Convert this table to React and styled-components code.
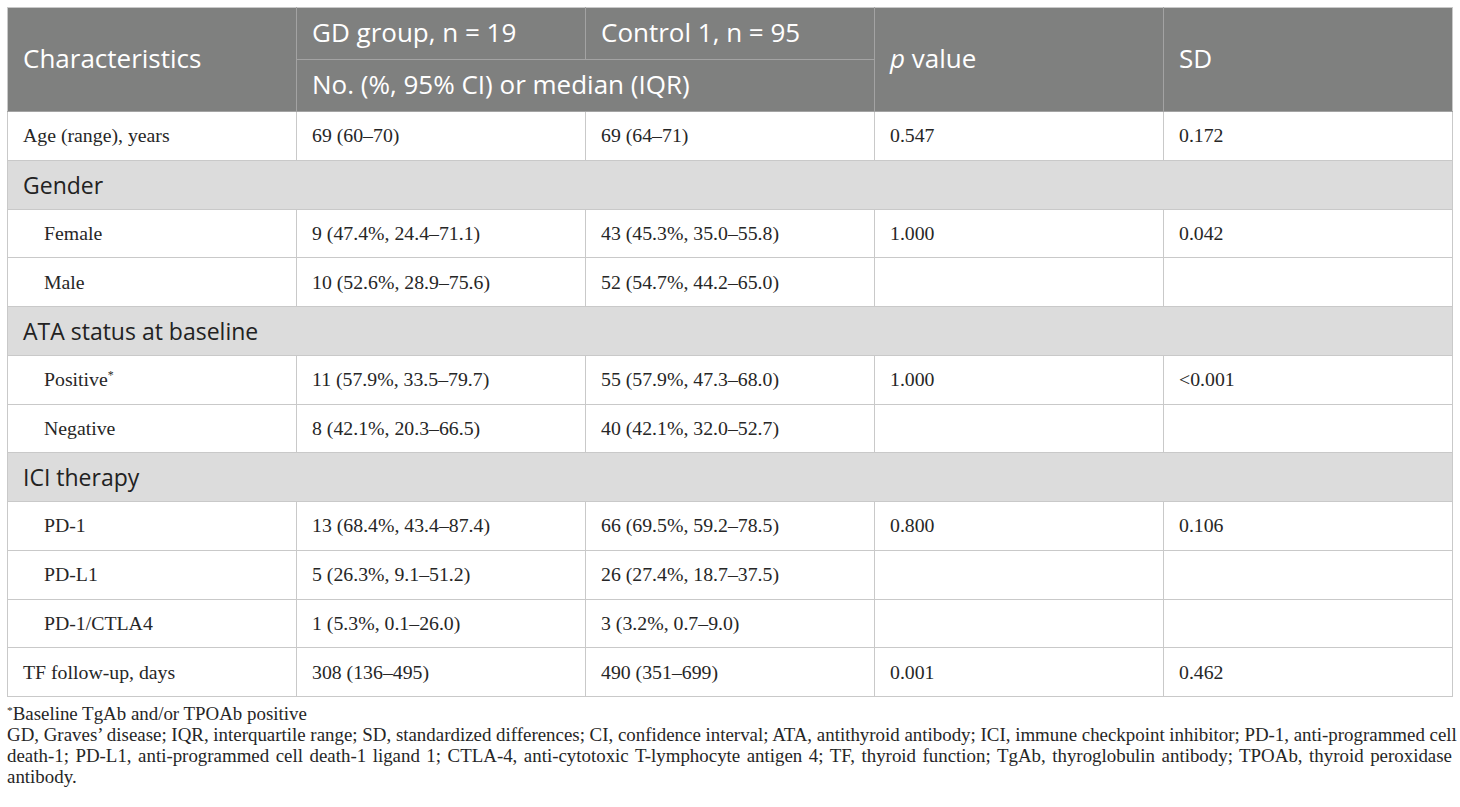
import React from "react";
import styled, { createGlobalStyle } from "styled-components";

const Global = createGlobalStyle`
  html, body { margin: 0; padding: 0; background: #ffffff; }
  body { font-family: "Liberation Serif", "Times New Roman", serif; }
`;

const Page = styled.div`
  padding: 7px 8px 0 7px;
  width: 1445px;
`;

const Table = styled.table`
  width: 1446px;
  border-collapse: collapse;
  table-layout: fixed;
  border: 1px solid #c9c9c9;
`;

const HeadCell = styled.th`
  background: #7f807f;
  color: #ffffff;
  font-family: "Open Sans", "Noto Sans", sans-serif;
  font-weight: 400;
  font-size: 26px;
  line-height: 30px;
  text-align: left;
  padding: 0 0 4px 15px;
  height: 47px;
  border: 1px solid #a3a3a3;
  border-top-color: #c9c9c9;
  white-space: nowrap;
  vertical-align: middle;
  ${(p) => p.$edgeLeft && "border-left-color: #c9c9c9;"}
  ${(p) => p.$edgeRight && "border-right-color: #c9c9c9;"}
`;

const Em = styled.i`
  font-style: italic;
`;

const Row = styled.tr``;

const Cell = styled.td`
  font-family: "Liberation Serif", "Times New Roman", serif;
  font-size: 19.8px;
  color: #262626;
  height: 47.75px;
  padding: 0 0 0 ${(p) => (p.$indent ? 36 : 15)}px;
  border: 1px solid #c9c9c9;
  vertical-align: middle;
  white-space: nowrap;
`;

const GroupCell = styled.td`
  font-family: "Open Sans", "Noto Sans", sans-serif;
  font-size: 23px;
  color: #222222;
  background: #dcdcdc;
  height: 47.75px;
  padding: 0 0 0 15px;
  border: 1px solid #c9c9c9;
  vertical-align: middle;
`;

const Star = styled.sup`
  font-size: 0.6em;
  vertical-align: 0.55em;
  line-height: 0;
`;

const Notes = styled.div`
  margin-top: 6px;
  font-family: "Liberation Serif", "Times New Roman", serif;
  font-size: 18.9px;
  line-height: 21px;
  color: #262626;
`;

const NoteLine = styled.div`
  text-align: left;
  text-align-last: ${(p) => (p.$justify ? "justify" : "left")};
  white-space: nowrap;
`;

const rows = [
  { type: "data", cells: ["Age (range), years", "69 (60–70)", "69 (64–71)", "0.547", "0.172"] },
  { type: "group", label: "Gender" },
  { type: "data", indent: true, cells: ["Female", "9 (47.4%, 24.4–71.1)", "43 (45.3%, 35.0–55.8)", "1.000", "0.042"] },
  { type: "data", indent: true, cells: ["Male", "10 (52.6%, 28.9–75.6)", "52 (54.7%, 44.2–65.0)", "", ""] },
  { type: "group", label: "ATA status at baseline" },
  { type: "data", indent: true, cells: ["Positive*", "11 (57.9%, 33.5–79.7)", "55 (57.9%, 47.3–68.0)", "1.000", "<0.001"] },
  { type: "data", indent: true, cells: ["Negative", "8 (42.1%, 20.3–66.5)", "40 (42.1%, 32.0–52.7)", "", ""] },
  { type: "group", label: "ICI therapy" },
  { type: "data", indent: true, cells: ["PD-1", "13 (68.4%, 43.4–87.4)", "66 (69.5%, 59.2–78.5)", "0.800", "0.106"] },
  { type: "data", indent: true, cells: ["PD-L1", "5 (26.3%, 9.1–51.2)", "26 (27.4%, 18.7–37.5)", "", ""] },
  { type: "data", indent: true, cells: ["PD-1/CTLA4", "1 (5.3%, 0.1–26.0)", "3 (3.2%, 0.7–9.0)", "", ""] },
  { type: "data", cells: ["TF follow-up, days", "308 (136–495)", "490 (351–699)", "0.001", "0.462"] },
];

function renderFirst(text) {
  if (text.endsWith("*")) {
    return (
      <>
        {text.slice(0, -1)}
        <Star>*</Star>
      </>
    );
  }
  return text;
}

export default function App() {
  return (
    <>
      <Global />
      <Page>
        <Table>
          <colgroup>
            <col />
            <col />
            <col />
            <col />
            <col />
          </colgroup>
          <thead>
            <tr>
              <HeadCell rowSpan={2} $edgeLeft>Characteristics</HeadCell>
              <HeadCell>GD group, n = 19</HeadCell>
              <HeadCell>Control 1, n = 95</HeadCell>
              <HeadCell rowSpan={2}>
                <Em>p</Em> value
              </HeadCell>
              <HeadCell rowSpan={2} $edgeRight>SD</HeadCell>
            </tr>
            <tr>
              <HeadCell colSpan={2}>No. (%, 95% CI) or median (IQR)</HeadCell>
            </tr>
          </thead>
          <tbody>
            {rows.map((r, i) =>
              r.type === "group" ? (
                <Row key={i}>
                  <GroupCell colSpan={5}>{r.label}</GroupCell>
                </Row>
              ) : (
                <Row key={i}>
                  {r.cells.map((c, j) => (
                    <Cell key={j} $indent={j === 0 && r.indent}>
                      {j === 0 ? renderFirst(c) : c}
                    </Cell>
                  ))}
                </Row>
              )
            )}
          </tbody>
        </Table>
        <Notes>
          <NoteLine>
            <Star>*</Star>Baseline TgAb and/or TPOAb positive
          </NoteLine>
          <NoteLine $justify>
            GD, Graves’ disease; IQR, interquartile range; SD, standardized differences; CI, confidence interval; ATA, antithyroid antibody; ICI, immune checkpoint inhibitor; PD-1, anti-programmed cell
          </NoteLine>
          <NoteLine $justify>
            death-1; PD-L1, anti-programmed cell death-1 ligand 1; CTLA-4, anti-cytotoxic T-lymphocyte antigen 4; TF, thyroid function; TgAb, thyroglobulin antibody; TPOAb, thyroid peroxidase
          </NoteLine>
          <NoteLine>antibody.</NoteLine>
        </Notes>
      </Page>
    </>
  );
}
